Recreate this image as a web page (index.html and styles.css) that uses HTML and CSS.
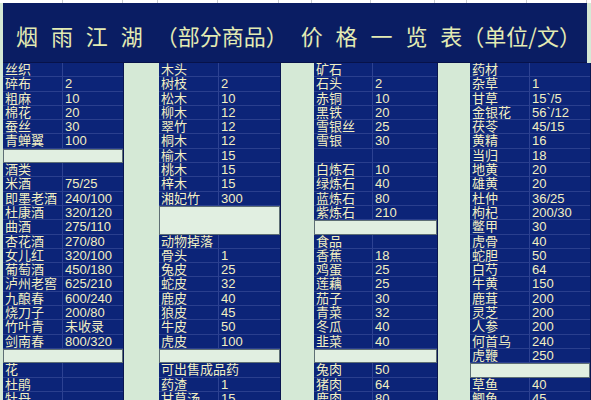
FILE: index.html
```html
<!DOCTYPE html>
<html lang="zh">
<head>
<meta charset="utf-8">
<title>烟雨江湖 价格一览表</title>
<link rel="stylesheet" href="styles.css">
</head>
<body>
<div class="page">
  <div class="topstrip">
    <div class="tc w60"></div><div class="tc w60"></div><div class="tc w35"></div><div class="tc w60"></div><div class="tc w61"></div><div class="tc w33"></div><div class="tc w59"></div><div class="tc w64"></div><div class="tc w32"></div><div class="tc w60"></div><div class="tc w60"></div>
  </div>
  <div class="title">烟 雨 江 湖 （部分商品） 价 格 一 览 表（单位/文）</div>
  <div class="data">
    <div class="block b1">
      <div class="n">丝织</div><div class="v"></div>
      <div class="n">碎布</div><div class="v">2</div>
      <div class="n">粗麻</div><div class="v">10</div>
      <div class="n">棉花</div><div class="v">20</div>
      <div class="n">蚕丝</div><div class="v">30</div>
      <div class="n">青蝉翼</div><div class="v">100</div>
      <div class="gap"></div>
      <div class="n">酒类</div><div class="v"></div>
      <div class="n">米酒</div><div class="v">75/25</div>
      <div class="n">即墨老酒</div><div class="v">240/100</div>
      <div class="n">杜康酒</div><div class="v">320/120</div>
      <div class="n">曲酒</div><div class="v">275/110</div>
      <div class="n">杏花酒</div><div class="v">270/80</div>
      <div class="n">女儿红</div><div class="v">320/100</div>
      <div class="n">葡萄酒</div><div class="v">450/180</div>
      <div class="n">泸州老窖</div><div class="v">625/210</div>
      <div class="n">九酿春</div><div class="v">600/240</div>
      <div class="n">烧刀子</div><div class="v">200/80</div>
      <div class="n">竹叶青</div><div class="v">未收录</div>
      <div class="n">剑南春</div><div class="v">800/320</div>
      <div class="gap"></div>
      <div class="n">花</div><div class="v"></div>
      <div class="n">杜鹃</div><div class="v"></div>
      <div class="n">牡丹</div><div class="v"></div>
    </div>
    <div class="block b2">
      <div class="n">木头</div><div class="v"></div>
      <div class="n">树枝</div><div class="v">2</div>
      <div class="n">松木</div><div class="v">10</div>
      <div class="n">柳木</div><div class="v">12</div>
      <div class="n">翠竹</div><div class="v">12</div>
      <div class="n">桐木</div><div class="v">12</div>
      <div class="n">榆木</div><div class="v">15</div>
      <div class="n">桃木</div><div class="v">15</div>
      <div class="n">梓木</div><div class="v">15</div>
      <div class="n">湘妃竹</div><div class="v">300</div>
      <div class="gap tall"></div>
      <div class="n">动物掉落</div><div class="v"></div>
      <div class="n">骨头</div><div class="v">1</div>
      <div class="n">兔皮</div><div class="v">25</div>
      <div class="n">蛇皮</div><div class="v">32</div>
      <div class="n">鹿皮</div><div class="v">40</div>
      <div class="n">狼皮</div><div class="v">45</div>
      <div class="n">牛皮</div><div class="v">50</div>
      <div class="n">虎皮</div><div class="v">100</div>
      <div class="gap"></div>
      <div class="n wide">可出售成品药</div><div class="v"></div>
      <div class="n">药渣</div><div class="v">1</div>
      <div class="n">甘草汤</div><div class="v">15</div>
    </div>
    <div class="block b3">
      <div class="n">矿石</div><div class="v"></div>
      <div class="n">石头</div><div class="v">2</div>
      <div class="n">赤铜</div><div class="v">10</div>
      <div class="n">黑铁</div><div class="v">20</div>
      <div class="n">雪银丝</div><div class="v">25</div>
      <div class="n">雪银</div><div class="v">30</div>
      <div class="n"></div><div class="v"></div>
      <div class="n">白炼石</div><div class="v">10</div>
      <div class="n">绿炼石</div><div class="v">40</div>
      <div class="n">蓝炼石</div><div class="v">80</div>
      <div class="n">紫炼石</div><div class="v">210</div>
      <div class="gap"></div>
      <div class="n">食品</div><div class="v"></div>
      <div class="n">香蕉</div><div class="v">18</div>
      <div class="n">鸡蛋</div><div class="v">25</div>
      <div class="n">莲藕</div><div class="v">25</div>
      <div class="n">茄子</div><div class="v">30</div>
      <div class="n">青菜</div><div class="v">32</div>
      <div class="n">冬瓜</div><div class="v">40</div>
      <div class="n">韭菜</div><div class="v">40</div>
      <div class="gap"></div>
      <div class="n">兔肉</div><div class="v">50</div>
      <div class="n">猪肉</div><div class="v">64</div>
      <div class="n">鹿肉</div><div class="v">80</div>
    </div>
    <div class="block b4">
      <div class="n">药材</div><div class="v"></div>
      <div class="n">杂草</div><div class="v">1</div>
      <div class="n">甘草</div><div class="v">15`/5</div>
      <div class="n">金银花</div><div class="v">56`/12</div>
      <div class="n">茯苓</div><div class="v">45/15</div>
      <div class="n">黄精</div><div class="v">16</div>
      <div class="n">当归</div><div class="v">18</div>
      <div class="n">地黄</div><div class="v">20</div>
      <div class="n">雄黄</div><div class="v">20</div>
      <div class="n">杜仲</div><div class="v">36/25</div>
      <div class="n">枸杞</div><div class="v">200/30</div>
      <div class="n">鳖甲</div><div class="v">30</div>
      <div class="n">虎骨</div><div class="v">40</div>
      <div class="n">蛇胆</div><div class="v">50</div>
      <div class="n">白芍</div><div class="v">64</div>
      <div class="n">牛黄</div><div class="v">150</div>
      <div class="n">鹿茸</div><div class="v">200</div>
      <div class="n">灵芝</div><div class="v">200</div>
      <div class="n">人参</div><div class="v">200</div>
      <div class="n">何首乌</div><div class="v">240</div>
      <div class="n">虎鞭</div><div class="v">250</div>
      <div class="gap"></div>
      <div class="n">草鱼</div><div class="v">40</div>
      <div class="n">鲫鱼</div><div class="v">45</div>
    </div>
  </div>
</div>
</body>
</html>
```
FILE: styles.css
```css
html, body {
  margin: 0;
  padding: 0;
  width: 591px;
  height: 400px;
  overflow: hidden;
  background: #d5e9d6;
  font-family: "Liberation Sans", "Noto Sans CJK SC", sans-serif;
}
.page {
  display: flex;
  flex-direction: column;
  width: 591px;
  height: 400px;
}
.topstrip {
  display: flex;
  height: 3px;
  padding-left: 3px;
  background: #ffffff;
  flex: none;
}
.tc {
  height: 3px;
  box-sizing: border-box;
  border-right: 1px solid #c9cdd0;
}
.w60 { width: 60px; }
.w35 { width: 35px; }
.w61 { width: 61px; }
.w33 { width: 33px; }
.w59 { width: 59px; }
.w64 { width: 64px; }
.w32 { width: 32px; }
.title {
  flex: none;
  margin: 0 4px 0 3px;
  height: 60px;
  box-sizing: border-box;
  background: #0a1d63;
  border-bottom: 1px solid #07124a;
  color: #e3ebb3;
  font-family: "Noto Sans CJK SC", sans-serif;
  font-size: 22px;
  line-height: 22px;
  padding: 21px 0 0 13px;
  word-spacing: 8px;
  white-space: nowrap;
}
.data {
  display: flex;
  padding-left: 3px;
  flex: none;
}
.block {
  display: grid;
  grid-auto-rows: 14.3px;
  background: #0c2478;
  border-right: 1px solid #0a1650;
  box-sizing: border-box;
}
.b1 { grid-template-columns: 60px 60px; }
.b2 { grid-template-columns: 60px 61px; margin-left: 35px; }
.b3 { grid-template-columns: 59px 64px; margin-left: 33px; }
.b4 { grid-template-columns: 60px 60px; margin-left: 32px; }
.n, .v {
  box-sizing: border-box;
  border-bottom: 1px solid #2a3f8e;
  color: #f2efc2;
  font-size: 13px;
  line-height: 14px;
  white-space: nowrap;
  overflow: visible;
}
.n {
  padding-left: 2px;
  border-right: 1px solid #2d4292;
  position: relative;
  z-index: 1;
}
.v {
  padding-left: 2px;
  background: #0c2478;
}
.n.wide + .v { background: transparent; }
.gap {
  grid-column: span 2;
  background: #e1efe1;
  border: 1px solid #5d6e74;
  box-sizing: border-box;
}
.gap.tall { grid-row: span 2; }
```
